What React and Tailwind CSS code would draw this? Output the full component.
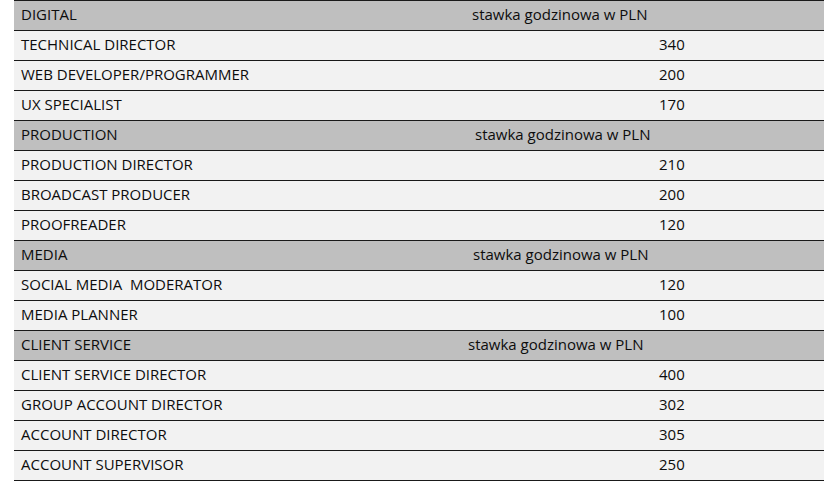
const sections = [
  {
    title: "DIGITAL",
    headerPad: "pl-[458px]",
    rows: [
      ["TECHNICAL DIRECTOR", "340"],
      ["WEB DEVELOPER/PROGRAMMER", "200"],
      ["UX SPECIALIST", "170"],
    ],
  },
  {
    title: "PRODUCTION",
    headerPad: "pl-[461px]",
    rows: [
      ["PRODUCTION DIRECTOR", "210"],
      ["BROADCAST PRODUCER", "200"],
      ["PROOFREADER", "120"],
    ],
  },
  {
    title: "MEDIA",
    headerPad: "pl-[459px]",
    rows: [
      ["SOCIAL MEDIA\u00a0 MODERATOR", "120"],
      ["MEDIA PLANNER", "100"],
    ],
  },
  {
    title: "CLIENT SERVICE",
    headerPad: "pl-[454px]",
    rows: [
      ["CLIENT SERVICE DIRECTOR", "400"],
      ["GROUP ACCOUNT DIRECTOR", "302"],
      ["ACCOUNT DIRECTOR", "305"],
      ["ACCOUNT SUPERVISOR", "250"],
    ],
  },
];

export default function App() {
  return (
    <div className="w-[833px] h-[496px] bg-white pl-[14px] font-['Open_Sans',sans-serif] text-[15px] text-[#0d0d0d]">
      <div className="w-[810px] border-t border-[#1a1a1a]">
        {sections.map((s) => (
          <div key={s.title}>
            {/* section header */}
            <div className="relative h-[30px] pb-[2px] bg-[#bfbfbf] border-b border-[#1a1a1a] flex items-center">
              <span className="absolute left-[7px]">{s.title}</span>
              <span className={s.headerPad}>stawka godzinowa w PLN</span>
            </div>
            {s.rows.map(([name, rate]) => (
              <div
                key={name}
                className="h-[30px] pb-[2px] bg-[#f2f2f2] border-b border-[#1a1a1a] flex items-center"
              >
                <span className="w-[645px] pl-[7px]">{name}</span>
                <span>{rate}</span>
              </div>
            ))}
          </div>
        ))}
      </div>
    </div>
  );
}
